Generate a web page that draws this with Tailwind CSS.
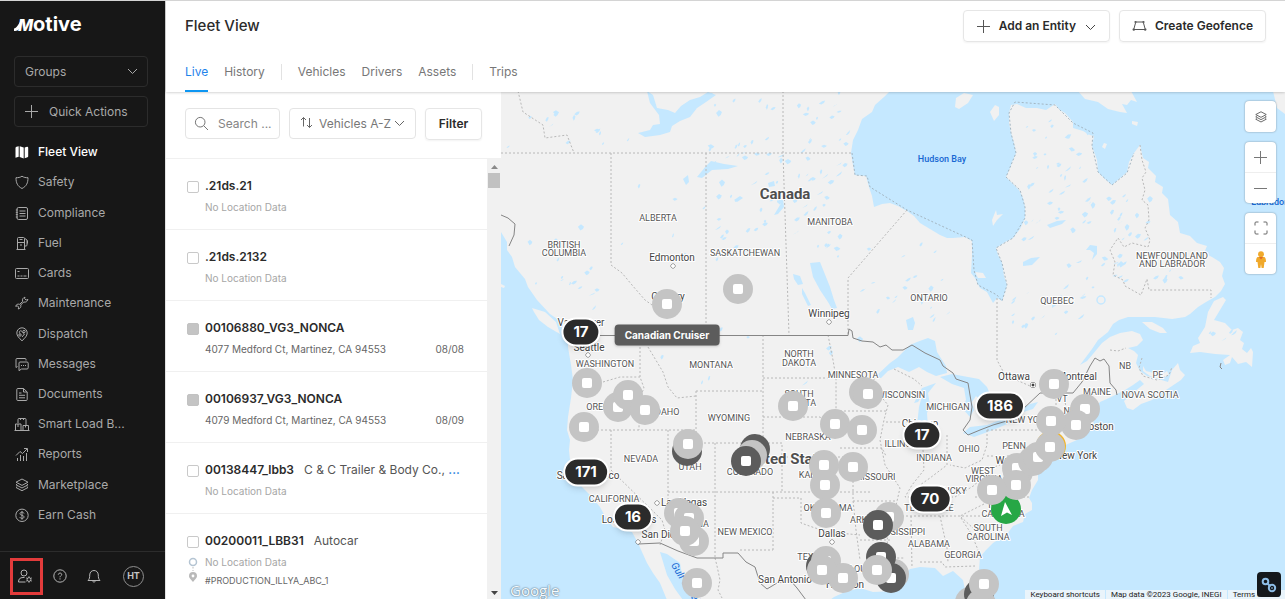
<!DOCTYPE html>
<html lang="en">
<head>
<meta charset="utf-8">
<meta name="viewport" content="width=device-width, initial-scale=1">
<title>Fleet View</title>
<script src="https://cdn.jsdelivr.net/npm/@tailwindcss/browser@4"></script>
</head>
<body class="flex h-screen flex-col overflow-hidden border-t border-[#d4d4d4] bg-white font-['Inter',sans-serif] text-[#2b2b2b]">
<div class="flex min-h-0 flex-1">

<!-- Sidebar -->
<aside class="flex w-[165px] shrink-0 flex-col bg-[#171717] text-[#a9a9a9]">
  <a href="#" aria-label="Motive" class="mt-[9px] ml-[14px] flex h-7 items-baseline text-white">
    <svg width="8" height="12" viewBox="0 0 8 12" class="-mr-[4px]" aria-hidden="true"><path d="M0 12V9.500C2.500 9.500 4 6 7.500 .5L7 7C5 11 3.500 12 0 12Z" fill="#fff"/></svg>
    <span class="text-[16px] font-extrabold italic">M</span><span class="text-[20px] leading-7 font-bold">otive</span>
  </a>
  <div class="mt-[18px] flex flex-col gap-[9px] pr-[17px] pl-[14px]">
    <button class="flex h-[31px] items-center justify-between rounded-sm border border-[#2c2c2c] px-[10px] text-xs">Groups
      <svg width="11" height="7" viewBox="0 0 11 7" fill="none" stroke="#a9a9a9" class="-mr-px"><path d="M1 1l4.500 4.500L10 1"/></svg>
    </button>
    <button class="flex h-[31px] items-center gap-[11px] rounded-sm border border-[#2c2c2c] px-[10px] text-xs whitespace-nowrap">
      <svg width="13" height="13" viewBox="0 0 13 13" stroke="#a9a9a9" class="shrink-0"><path d="M6.500 0v13M0 6.500h13"/></svg>Quick Actions
    </button>
  </div>
  <nav id="nav" class="mt-[10px] mb-[21px] flex min-h-0 flex-1 flex-col px-[14px] text-xs">
    <a href="#" class="flex flex-1 items-center gap-2 font-medium text-white"><svg width="16" height="16" viewBox="0 0 16 16" fill="#fff"><path d="M1.500 4q0-1 1-1.200l2.200-.6v10.500l-3.200 1zM5.700 2.200l4 1.300v11l-4-1.600zM10.700 3.500l2.300-.8q1.200-.2 1.200 1v8.500q0 .8-.8 1.100l-2.700.9z"/></svg>Fleet View</a>
    <a href="#" class="flex flex-1 items-center gap-2"><svg width="16" height="16" viewBox="0 0 16 16" fill="none" stroke="currentColor"><path d="M8 2.200c1.800 1.200 3.800 1.600 6 1.500 0 5.300-1.500 8.500-6 10.800-4.500-2.300-6-5.500-6-10.800 2.200.1 4.200-.3 6-1.500z"/></svg>Safety</a>
    <a href="#" class="flex flex-1 items-center gap-2"><svg width="16" height="16" viewBox="0 0 16 16" fill="none" stroke="currentColor"><rect x="3" y="2.500" width="10.500" height="12" rx="1.500"/><path d="M5.500 6h6M5.500 8.500h6M5.500 11h6M1.800 5h2M1.800 7.300h2M1.800 9.600h2M1.800 12h2"/></svg>Compliance</a>
    <a href="#" class="flex flex-1 items-center gap-2"><svg width="16" height="16" viewBox="0 0 16 16" fill="none" stroke="currentColor"><path d="M2.500 14.500h9M3.500 14.500v-11q0-1 1-1h5q1 0 1 1v11M3.500 7.500h7M5.500 4.500h3M10.500 11h1.500q1 0 1-1V5l-2-1.500M13.500 5.500v3M6 10h2"/></svg>Fuel</a>
    <a href="#" class="flex flex-1 items-center gap-2"><svg width="16" height="16" viewBox="0 0 16 16" fill="none" stroke="currentColor"><rect x="1.500" y="3.500" width="13" height="10" rx="1"/><path d="M3.500 6.500h2M3.500 11h2M6.500 11h2M9.500 11h3"/></svg>Cards</a>
    <a href="#" class="flex flex-1 items-center gap-2"><svg width="16" height="16" viewBox="0 0 16 16" fill="none" stroke="currentColor"><path d="M11 2.200c-2 .5-3 2-2.300 4.100L5.700 9.300c-2-.6-3.600.2-4 2l1.800-.4 1.200 1.200-.4 1.900c2-.3 3-2.200 2.400-4l3-3c2 .6 4-.6 4.200-2.600l-1.800.7-1.500-1.400z" stroke-linejoin="round"/></svg>Maintenance</a>
    <a href="#" class="flex flex-1 items-center gap-2"><svg width="16" height="16" viewBox="0 0 16 16" fill="none" stroke="currentColor"><path d="M8 14.800C5 12 2.800 9.800 2.800 7a5.200 5.200 0 0 1 10.400 0c0 2.800-2.200 5-5.200 7.800z"/><circle cx="6" cy="9" r="1.200"/><circle cx="10" cy="5.500" r="1.200"/><path d="M5.800 7.500c-1.500-2.500 1-3.500 2.200-2s1 2 2.500 2.500L8 11"/></svg>Dispatch</a>
    <a href="#" class="flex flex-1 items-center gap-2"><svg width="16" height="16" viewBox="0 0 16 16" fill="none" stroke="currentColor"><path d="M3.500 10.500l-1.500 1V3.500q0-1 1-1h8q1 0 1 1v1M6 6h7q1.200 0 1.200 1.200v4.600q0 1.200-1.200 1.200H7.500L5 14.700V7q0-1 1-1zM7 9.500h1M9 9.500h1M11 9.500h1"/></svg>Messages</a>
    <a href="#" class="flex flex-1 items-center gap-2"><svg width="16" height="16" viewBox="0 0 16 16" fill="none" stroke="currentColor"><path d="M9.500 2.500H3.800q-1 0-1 1v10q0 1 1 1h8.400q1 0 1-1V6zM9.500 2.500V6h3.700M5 7h2.500M5 9.300h6M5 11.800h6"/></svg>Documents</a>
    <a href="#" class="flex flex-1 items-center gap-2"><svg width="16" height="16" viewBox="0 0 16 16" fill="none" stroke="currentColor"><path d="M4 7V3.500q0-1 1-1h6q1 0 1 1V9M1.500 8h5.500v6.500H1.500zM7 14.500h7.500v-5H9V14M4 8v3M11.500 9.500v2M6.500 2.500v1.500M9.500 2.500v1.500M.5 14.500h15"/></svg>Smart Load B...</a>
    <a href="#" class="flex flex-1 items-center gap-2"><svg width="16" height="16" viewBox="0 0 16 16" fill="none" stroke="currentColor"><path d="M3.500 15v-3M6.500 15v-6M9.500 15v-5M12.500 15V7M2 9.500l4-4 2.500 2L13 3M10 2.500h3.500V6"/></svg>Reports</a>
    <a href="#" class="flex flex-1 items-center gap-2"><svg width="16" height="16" viewBox="0 0 16 16" fill="none" stroke="currentColor" stroke-linejoin="round"><path d="M8 2l6 3.200-6 3.200-6-3.200zM3.200 7L2 7.800 8 11l6-3.200-1.200-.8M3.200 9.700L2 10.500l6 3.200 6-3.200-1.200-.8"/></svg>Marketplace</a>
    <a href="#" class="flex flex-1 items-center gap-2"><svg width="16" height="16" viewBox="0 0 16 16" fill="none" stroke="currentColor"><circle cx="8" cy="8.300" r="6.200"/><path d="M10 6.500c-.3-1-1-1.300-2-1.300-2.700 0-2.600 2.700 0 3.100 2.700.4 2.700 3.100 0 3.100-1.200 0-1.900-.5-2.100-1.400M8 4v8.700"/></svg>Earn Cash</a>
  </nav>
  <div class="flex h-12 items-center border-t border-[#2c2c2c] pt-px pl-[10px]">
    <button aria-label="Admin" class="flex h-[37px] w-[33px] items-center justify-center border-[3px] border-[#e23b3b]">
      <svg width="16" height="16" viewBox="0 0 16 16" fill="none" stroke="#b5b5b5" class="-ml-1"><circle cx="7" cy="5" r="3"/><path d="M8.500 14H1.500c0-3 1.500-4.500 4.500-4.500h1.500"/><circle cx="12" cy="11.500" r="1.900"/><path d="M12 8.300v1.300M12 13.400v1.300M9.200 9.900l1.100.6M13.700 12.500l1.100.6M9.200 13.100l1.100-.6M13.700 10.500l1.100-.6"/></svg>
    </button>
    <button aria-label="Help" class="ml-[9px]"><svg width="16" height="16" viewBox="0 0 16 16" fill="none" stroke="#b5b5b5"><circle cx="8" cy="8" r="6.200"/><path d="M6.300 6.700c0-2.200 3.400-2.100 3.400-.2C9.700 7.800 8 7.800 8 9.300M8 10.300v1.200"/></svg></button>
    <button aria-label="Notifications" class="ml-[18px]"><svg width="16" height="16" viewBox="0 0 16 16" fill="none" stroke="#b5b5b5"><path d="M2 12.500h12c-1.500-1.500-1.700-3-1.700-5.500 0-6-8.600-6-8.600 0 0 2.500-.2 4-1.700 5.500zM6.500 12.500c0 2 3 2 3 0"/></svg></button>
    <button class="ml-[21px] flex size-[21px] items-center justify-center rounded-full border border-[#8f8f8f] text-[9px] font-bold text-[#c4c4c4]">HT</button>
  </div>
</aside>

<!-- Main column -->
<main class="flex min-w-0 flex-1 flex-col border-l border-[#e3e3e3]">
  <header class="relative z-20 bg-white pl-[19px] shadow-[0_0_3px_rgba(0,0,0,0.3)]">
    <div class="flex h-[50px] items-center justify-between pr-[19px]">
      <h1 class="text-[15px] font-medium">Fleet View</h1>
      <div class="flex gap-[9px] text-xs font-semibold">
        <button class="flex h-8 items-center rounded border border-[#e6e6e6] px-[13px] shadow-xs">
          <svg width="13" height="13" viewBox="0 0 13 13" stroke="#555"><path d="M6.500 0v13M0 6.500h13"/></svg>
          <span class="ml-[9px]">Add an Entity</span>
          <svg width="11" height="7" viewBox="0 0 11 7" fill="none" stroke="#444" class="mt-0.5 ml-[9px]"><path d="M1 1l4.500 4.500L10 1"/></svg>
        </button>
        <button class="flex h-8 items-center rounded border border-[#e6e6e6] px-[12px] shadow-xs">
          <svg width="15" height="12" viewBox="0 0 15 12" fill="none" stroke="#555"><path d="M4 2h7M2 9.500h11M3.500 3L2 8.500M11.500 3L13 8.500"/><g fill="#555" stroke="none"><circle cx="3.500" cy="2" r="1.100"/><circle cx="11.500" cy="2" r="1.100"/><circle cx="1.800" cy="9.500" r="1.200"/><circle cx="13.200" cy="9.500" r="1.200"/></g></svg>
          <span class="ml-2">Create Geofence</span>
        </button>
      </div>
    </div>
    <nav aria-label="Views" class="flex h-[41px] items-center text-xs text-[#777]">
      <a href="#" class="relative flex h-full items-center text-[#1f83ea]">Live<span class="absolute inset-x-0 bottom-0 h-0.5 bg-[#0d96f2]"></span></a>
      <a href="#" class="ml-4">History</a>
      <span class="mx-4 h-4 w-px bg-[#e2e2e2]"></span>
      <a href="#">Vehicles</a>
      <a href="#" class="ml-4">Drivers</a>
      <a href="#" class="ml-4">Assets</a>
      <span class="mx-4 h-4 w-px bg-[#e2e2e2]"></span>
      <a href="#">Trips</a>
    </nav>
  </header>

  <div class="flex min-h-0 flex-1">
    <!-- Vehicle list -->
    <section class="flex w-[335px] shrink-0 flex-col">
      <div class="flex h-[67px] shrink-0 items-center border-b border-[#f0f0f0] pb-[3px] pl-[19px] text-xs">
        <label class="flex h-[31px] w-[95px] items-center rounded border border-[#e4e4e4] pl-2">
          <svg width="15" height="15" viewBox="0 0 15 15" fill="none" stroke="#777" class="shrink-0"><circle cx="6.200" cy="6.200" r="4.800"/><path d="M9.700 9.700l4.300 4.300"/></svg>
          <input type="text" aria-label="Search" placeholder="Search ..." class="ml-[9px] w-full min-w-0 bg-transparent outline-none placeholder:text-[#858585]">
        </label>
        <label class="relative ml-[9px] flex h-[31px] w-[127px] items-center rounded border border-[#e4e4e4] pl-[10px] text-[#777]">
          <svg width="13" height="15" viewBox="0 0 13 15" fill="none" stroke="#666" class="shrink-0"><path d="M3.500 10.500V1.500M1 4l2.500-2.500L6 4M9.500 2v9.500M7 9L9.500 11.500 12 9"/></svg>
          <select aria-label="Sort by" class="ml-[6px] w-full appearance-none bg-transparent outline-none"><option>Vehicles A-Z</option><option>Vehicles Z-A</option></select>
          <svg width="11" height="7" viewBox="0 0 11 7" fill="none" stroke="#666" class="pointer-events-none absolute right-[10px]"><path d="M1 1l4.500 4.500L10 1"/></svg>
        </label>
        <button class="ml-[9px] h-8 w-[57px] rounded border border-[#e6e6e6] font-semibold shadow-xs">Filter</button>
      </div>
      <div class="flex min-h-0 flex-1">
        <ul id="list" class="min-w-0 flex-1 overflow-hidden"></ul>
        <div class="flex w-[14px] flex-col items-center bg-[#f1f1f1]">
          <svg width="7" height="4" viewBox="0 0 7 4" class="mt-[6px] shrink-0"><path d="M0 4l3.500-4L7 4z" fill="#8a8a8a"/></svg>
          <div class="mt-1 h-[15px] w-[12px] shrink-0 bg-[#c1c1c1]"></div>
          <svg width="7" height="4" viewBox="0 0 7 4" class="mt-auto mb-1 shrink-0"><path d="M0 0l3.500 4L7 0z" fill="#444"/></svg>
        </div>
      </div>
    </section>

    <!-- Map -->
    <section aria-label="Map" class="relative min-w-0 flex-1 overflow-hidden bg-[#c5e8ff]">
      <svg class="absolute inset-0 h-full w-full" font-family="Roboto, sans-serif">
        <g transform="translate(-501 -92)">
          <path fill="#f1f1f1" d="M501 91H890L884 97 875 105 872 112 862 119 858 130 853 140 851 153 853 165 855 175 866 176 869 187 872 196 874 207 882 204 890 203 898 206 907 211 914 216 920 223 930 229 940 235 947 238 953 238 965 237 972 241V256L971 273 975 278 980 288 987 292 993 303 997 298 1002 301 1005 292 1007 285 1004 276 1002 263 998 255 996 248 1005 242 1013 238 1020 229 1025 218 1025 207 1023 198 1019 190 1012 183 1006 177 1010 168 1012 162 1016 153 1014 143 1011 133 1009 123 1009 113 1011 105 1017 104 1026 108 1037 108 1046 110 1055 104 1060 110 1065 113 1073 122 1073 128 1083 131 1090 135 1094 136 1092 146 1097 160 1098 172 1105 179 1112 185 1119 179 1127 172 1129 162 1134 153 1140 145 1143 158 1149 162 1148 168 1156 176 1155 182 1163 187 1162 193 1168 199 1170 215 1178 222 1180 233 1190 236 1197 243 1207 246 1204 253 1212 257 1220 262 1224 268 1222 276 1225 284 1221 291 1215 297 1206 302 1198 307 1190 314 1185 317 1172 319 1155 317 1128 317 1119 320 1113 324 1108 332 1098 340 1092 349 1086 357 1080 365 1087 361 1093 354 1102 343 1110 337 1120 333 1132 331 1140 334 1143 340 1137 346 1128 348 1134 351 1138 355 1136 363 1140 371 1147 376 1155 378 1168 382 1172 370 1178 363 1180 370 1185 375 1181 380 1172 386 1160 394 1152 400 1141 404 1133 410 1127 408 1124 401 1133 393 1144 384 1140 380 1133 385 1125 390 1117 394 1109 398 1100 402 1094 410 1093 420 1095 428 1089 430 1084 436 1077 440 1063 446 1056 453 1050 463 1045 470 1038 473 1038 480 1032 490 1029 498 1032 503 1032 510 1025 514 1023 522 1013 526 1007 534 993 543 986 550 980 557 979 570 985 587 993 599H967L963 580 953 571 943 576 935 568 920 567 910 569 905 574 895 591 873 592 860 588 845 592 834 597 830 600H667L660 583 653 573 647 563 642 552 638 543 632 532 622 529 613 527 606 518 600 507 590 495 582 487 578 473 570 460 569 450 570 440 567 430 568 417 571 398 573 380 571 365 568 347 568 335 563 323 550 314 537 300 528 287 525 279 515 267 512 257 507 250 507 242 501 232Z"/>
          <g fill="#f1f1f1">
            <path d="M532 308L545 312 556 322 560 334 548 327 539 320 534 312ZM501 284l4 2-1 2-3-1ZM1078 91H1131L1137 102 1131 100 1127 105 1122 104 1127 113 1120 112 1108 109 1098 102 1085 99ZM1132 121l6 1-1 4-5-2ZM955 107l1-9 8-5 9 2-5 8-9 6ZM990 112l5-7 4 2v8l-5 6ZM1104 143l3 1-2 5-3-2ZM1273 91H1285V114L1277 108ZM975 272l8 1 3 5-8 0ZM992 220l4-10 1 5 6-1-6 6-4 6ZM1142 322L1152 322 1163 328 1167 333 1160 333 1150 329ZM1143 366l3 5 8 2 9 1 4-3 2 4-9 4-10-3-7-5Z"/>
            <path d="M1223 297L1226 300 1220 310 1214 320 1225 323 1232 330 1238 328 1243 332 1240 340 1244 343 1242 349 1247 353 1251 348 1253 352 1252 367 1246 362 1238 364 1232 357 1230 363 1225 365 1223 360 1230 355 1215 354 1200 352 1190 353 1193 346 1200 343 1198 338 1205 327 1208 312 1214 301Z"/>
          </g>
          <g fill="#c5e8ff">
            <path d="M660 552L667 554 680 563 683 580 690 590 698 600H683L675 589 667 575Z"/>
            <path d="M647 91L653 95 657 108 668 110 675 113 681 106 690 100 700 97 708 92 716 95 706 102 697 108 690 117 680 121 672 126 670 132 660 135 645 137 638 133 650 130 653 125 660 124 659 115 650 103Z"/>
            <path d="M697 177L706 166 711 161 724 164 738 166 728 169 712 170 702 178ZM683 179l5-4 1 7-3 3ZM734 200l6-4 3 2-6 4ZM810 263L820 262 824 272 830 287 834 300 837 308 832 309 828 302 820 290 813 277ZM793 274l7 2 3 8-5 1-4-6ZM802 288l3 5 6 12-3 1-6-12ZM906 320l7-3 2 6-2 7-5 0ZM768 183l6-2 1 5-6 1ZM774 215l6-10 3-6 1 8-6 7ZM1086 250l4-5 7 1v8l-5 6 2-7-4-3ZM1023 262l8-4 9-1-8 8-9 1ZM1047 225l10-4 9-1-4 4-12 4ZM1052 305l6-8 4-2-4 9-6 4Z"/>
            <path d="M875 377L890 363 897 358 910 345 917 342 928 338 935 341 937 352 946 366 947 373 936 376 927 372 919 367 909 372 898 367 888 371 881 378ZM936 383L928 393 930 405 927 413 928 428 922 433 917 425 919 407 922 396 918 402 914 403 922 388ZM940 377L952 374 968 377 979 379 987 387 993 401 993 410 984 404 976 396 972 402 974 410 970 417 962 408 966 400 964 388 952 384ZM963 433L970 427 987 425 1000 420 1020 415 1012 422 993 430 974 437ZM1016 411l14-7 8-2-5 7-13 4Z"/>
          </g>
          <circle cx="1101" cy="300" r="4" fill="none" stroke="#c5e8ff" stroke-width="1.500"/>
          <g id="lakes" fill="#c5e8ff"></g>
          <g fill="none" stroke="#b8b8b8" stroke-width="1" stroke-dasharray="2 2">
            <path d="M501 153H852M518 91L523 112 543 125 545 138 567 135 574 153M611 153V265L622 273 632 285 645 300 652 305M706 153V335M783 91V153L789 335M907 210L848 278V335M997 298V360L1005 375 1030 386M1140 145L1142 160 1146 172 1142 178 1145 190 1142 200 1148 205 1149 220 1145 228 1150 240 1148 247 1132 243 1124 247 1118 238 1110 250 1115 262 1113 275 1123 280 1125 286 1141 295 1147 279 1149 290H1211V298M1110 350l8 1 8-3M1142 358l-3 10 4 8 14 4 12-5 3-8"/>
            <path stroke="#a4b6c2" d="M852 153L855 175 867 176 870 187 907 210 972 240 974 270 978 285 997 295 1002 301 1007 285 1002 263 996 248 1013 238 1025 218 1025 207 1020 190 1006 177 1016 153 1011 133 1009 113 1015 102 1055 105 1073 123 1093 133 1092 146 1098 172 1112 185 1127 173 1134 153"/>
            <path d="M603 382L620 377H640M640 335V377L644 388 639 400V430M648 335V347L663 372 668 387 677 398 696 396M696 391H763M696 391V443M585 430H696M611 430V470L662 520 665 530 660 545M668 430V516M696 443H782V492M668 492H872M715 443V558M763 335V443M763 378H836M763 417H820L833 427M782 457H851M773 492V550M773 498H801V523L815 528 838 533 860 535M740 550H773M828 335L833 360 836 378V411M836 411H886M840 448H882L886 456M853 457V500L856 530 860 560M853 501H895M860 540H890M874 370V388L888 405 884 420 880 440 885 465 900 488 895 510 887 540 890 558H905M894 369L914 379 922 386M886 422H918M922 430L924 470 912 485 905 497H953M947 435V465L930 478 920 485M898 516H997M911 516L912 568M940 516L947 548 948 562M920 562H942L945 567 975 566M961 518L972 535 980 555M984 504L960 516 975 530 990 530M987 430V445L982 460 965 468 950 465M987 430H1045L1050 440M987 456H1038M955 497L975 485 985 470 1000 465M975 497H1030M1056 395V420M1064 395L1068 420M1058 420H1082M715 558l2 8 3 14-2 10 4 8"/>
          </g>
          <g fill="none" stroke="#858585" stroke-width="1">
            <path d="M568 335.500H848L849 329 852 331 853 338 862 341 873 342 880 347 886 345 892 350 903 350 912 345 925 353 940 360 943 366 953 373 956 379 968 383 970 395 972 407 970 420 963 430 968 435 980 430 993 425 1017 418 1022 410 1040 393H1073L1082 382 1090 366 1095 358 1100 361 1104 359 1109 366 1110 383 1116 390 1117 395"/>
            <path d="M638 544L660 543 678 551 697 558H723V553H738L746 562 755 567 760 583 767 589 777 583 790 580 797 588 806 600M501 215L508 218 515 224 514 235 509 246M1221 363l-1 4 2 2"/>
          </g>
          <g id="labels" text-anchor="middle" stroke="#fff" stroke-width="2" stroke-linejoin="round" paint-order="stroke"></g>
        </g>
      </svg>

      <div id="markers"></div>

      <div class="absolute bottom-0 left-[9px] font-['Open_Sans',sans-serif] text-[15px] leading-[18px] text-[#f5fbff] [text-shadow:0_0_2px_#5c7080,0_0_1px_#5c7080]">Google</div>

      <!-- Map controls -->
      <div class="absolute top-[9px] right-[9px] flex w-[31px] flex-col gap-[10px]">
        <button aria-label="Layers" class="flex h-[31px] items-center justify-center rounded bg-white shadow-[0_0_2px_rgba(0,0,0,0.4)]">
          <svg width="14" height="14" viewBox="0 0 16 16" fill="none" stroke="#555" stroke-linejoin="round"><path d="M8 2l6 3.200-6 3.200-6-3.200zM3.200 7L2 7.800 8 11l6-3.200-1.200-.8M3.200 9.700L2 10.500l6 3.200 6-3.200-1.200-.8"/></svg>
        </button>
        <div class="flex flex-col rounded bg-white shadow-[0_0_2px_rgba(0,0,0,0.4)]">
          <button aria-label="Zoom in" class="flex h-[31px] items-center justify-center border-b border-[#eee]"><svg width="13" height="13" viewBox="0 0 13 13" stroke="#777"><path d="M6.500 0v13M0 6.500h13"/></svg></button>
          <button aria-label="Zoom out" class="flex h-[30px] items-center justify-center"><svg width="13" height="13" viewBox="0 0 13 13" stroke="#777"><path d="M0 6.500h13"/></svg></button>
        </div>
        <div class="flex flex-col rounded bg-white shadow-[0_0_2px_rgba(0,0,0,0.4)]">
          <button aria-label="Full screen" class="flex h-[31px] items-center justify-center border-b border-[#eee]"><svg width="14" height="14" viewBox="0 0 14 14" fill="none" stroke="#666"><path d="M1 4.500V2q0-1 1-1h2.500M9.500 1H12q1 0 1 1v2.500M13 9.500V12q0 1-1 1H9.500M4.500 13H2q-1 0-1-1V9.500"/></svg></button>
          <button aria-label="Street View" class="flex h-[30px] items-center justify-center"><svg width="12" height="17" viewBox="0 0 12 17"><circle cx="6" cy="3.200" r="2.900" fill="#f0a92b"/><path d="M2.500 6h7q1.500 1 1.500 5H9.500l-.8 6H6.600L6 13l-.6 4H3.300l-.8-6H1q0-4 1.500-5z" fill="#f0a92b"/><path d="M4 6l2 2.500L8 6z" fill="#e0662a"/></svg></button>
        </div>
      </div>

      <div class="absolute right-0 bottom-0 flex h-[9px] gap-px font-['Roboto',sans-serif] text-[8px] leading-[9px] whitespace-nowrap text-[#222]">
        <button class="bg-[#e9f4fb] px-[5px]">Keyboard shortcuts</button>
        <span class="bg-[#e9f4fb] px-[5px]">Map data ©2023 Google, INEGI</span>
        <a href="#" class="bg-[#e9f4fb] px-[5px]">Terms of Use</a>
      </div>
      <button aria-label="Chat" class="absolute right-1 bottom-[2px] flex h-[25px] w-6 items-center justify-center rounded-sm bg-[#14181c]">
        <svg width="16" height="16" viewBox="0 0 16 16" fill="none" stroke="#8dbde6" stroke-width="2"><circle cx="4.500" cy="4.500" r="2.800"/><circle cx="11" cy="11" r="3.200"/><path d="M6 6l3.500 3.500M11 10.500v1"/></svg>
      </button>
    </section>
  </div>
</main>
</div>

<script>
// Vehicle rows: id, extra name, location, date, destination
const rows = [
  ['.21ds.21'], ['.21ds.2132'],
  ['00106880_VG3_NONCA', '', '4077 Medford Ct, Martinez, CA 94553', '08/08'],
  ['00106937_VG3_NONCA', '', '4079 Medford Ct, Martinez, CA 94553', '08/09'],
  ['00138447_lbb3', 'C &amp; C Trailer &amp; Body Co., <a href="#" class="font-semibold text-[#2480e0]">...</a>'],
  ['00200011_LBB31', 'Autocar', '', '', '#PRODUCTION_ILLYA_ABC_1'],
];
document.getElementById('list').innerHTML = rows.map(([id, name, loc, date, dest], i) => `
<li class="flex min-h-[71px] border-b border-[#f0f0f0] pt-[18px] pr-[23px] pl-[21px] last:border-b-0">
  <div class="flex w-[18px] shrink-0 flex-col pt-0.5">
    <input type="checkbox" id="v${i}" class="mt-[2px] size-3 shrink-0 appearance-none rounded-xs border ${loc ? 'border-[#c2c2c2] bg-[#c4c4c4]' : 'border-[#c9c9c9] bg-white'}">
    ${dest ? '<svg width="12" height="26" viewBox="0 0 12 26" class="mt-[9px] shrink-0"><circle cx="6" cy="5" r="3.500" fill="none" stroke="#b4c4d2" stroke-width="1.500"/><path d="M6 10v1.500M6 13v1" stroke="#bbb"/><path d="M6 25c-3-3.500-4-4.500-4-6a4 4 0 0 1 8 0c0 1.500-1 2.500-4 6z" fill="#b9b9b9"/><circle cx="6" cy="19" r="1.400" fill="#fff"/></svg>' : ''}
  </div>
  <div class="min-w-0 flex-1">
    <div class="flex h-[18px] items-center gap-[10px] text-xs whitespace-nowrap text-[#555]"><label for="v${i}" class="font-semibold text-[#2b2b2b]">${id}</label><span>${name || ''}</span></div>
    <div class="mt-1 flex h-4 items-center justify-between text-[10px] ${loc ? 'text-[#666]' : 'text-[#a6a6a6]'}"><span>${loc || 'No Location Data'}</span><span>${date || ''}</span></div>
    ${dest ? `<div class="mt-1 text-[9px] leading-[14px] text-[#666]">${dest}</div>` : ''}
  </div>
</li>`).join('');

// Map labels: text, x, baseline y, size, weight, colour
const L = [];
const region = (t, x, y) => L.push([t, x, y, 9, 400, '#555']);
const city = (t, x, y) => L.push([t, x, y, 10, 400, '#444']);
[['BRITISH',564,248],['COLUMBIA',564,256],['ALBERTA',658,221],['SASKATCHEWAN',745,256],['MANITOBA',830,225],['ONTARIO',929,301],['QUEBEC',1057,304],['NEWFOUNDLAND',1172,259],['AND LABRADOR',1172,267],
['WASHINGTON',605,367],['MONTANA',711,368],['OREGON',604,410],['IDAHO',666,415],['WYOMING',729,421],['NEVADA',641,462],['UTAH',690,470],['COLORADO',750,475],['CALIFORNIA',614,502],['ARIZONA',690,527],['NEW MEXICO',745,535],
['NORTH',799,357],['DAKOTA',799,366],['SOUTH',799,397],['DAKOTA',799,406],['MINNESOTA',853,378],['WISCONSIN',901,398],['MICHIGAN',948,410],['NEBRASKA',808,440],['KANSAS',816,478],['MISSOURI',875,480],['ILLINOIS',902,447],['INDIANA',934,461],['OHIO',969,452],['KENTUCKY',944,494],['TENNESSEE',929,511],['OKLAHOMA',828,511],['ARKANSAS',873,523],['MISSISSIPPI',900,535],['ALABAMA',929,547],['GEORGIA',963,558],['TEXAS',811,560],['LOUISIANA',872,572],['WEST',983,474],['VIRGINIA',984,482],['NORTH',1003,508],['CAROLINA',1003,517],['SOUTH',988,531],['CAROLINA',988,540],['NEW YORK',1028,423],['PENN',1014,449],['VT',1062,402],['NH',1070,414],['MAINE',1097,395],['NB',1125,369],['PE',1158,378],['NOVA SCOTIA',1150,398]].forEach(a => region(...a));
[['Edmonton',672,261],['Calgary',668,300],['Winnipeg',829,317],['Vancouver',581,326],['Seattle',589,351],['San Francisco',588,479],['Los Angeles',629,523],['San Diego',664,538],['Las Vegas',684,506],['Dallas',832,537],['San Antonio',785,583],['Houston',845,588],['Chicago',920,427],['Ottawa',1014,380],['Montreal',1077,380],['Boston',1098,430],['New York',1076,459],['Washington',1022,464]].forEach(a => city(...a));
L.push(['Canada',785,199,15,700,'#4f4f4f'], ['United States',788,464,15,700,'#4f4f4f'], ['Hudson Bay',942,162,9,500,'#1667d2'], ['Labrador Sea',1278,205,9,500,'#1667d2']);
document.getElementById('labels').innerHTML = L.map(([t,x,y,s,w,c]) => `<text x="${x}" y="${y}" font-size="${s}" font-weight="${w}" fill="${c}"${c === '#1667d2' ? ' stroke="none"' : ''}>${t}</text>`).join('')
  + '<text transform="translate(690 596) rotate(58)" font-size="10" font-style="italic" fill="#1667d2" stroke="none">Gulf of California</text>'
  + [[673,266],[829,322],[588,355],[657,503],[638,542],[832,542]].map(([x,y]) => `<circle cx="${x}" cy="${y}" r="2" fill="#fff" stroke="#444" stroke-width="1"/>`).join('')
  + '<g stroke-width="1"><circle cx="1033" cy="385" r="2.500" fill="#fff" stroke="#444"/><circle cx="1033" cy="385" r="1" fill="#333" stroke="#333"/></g>';

// Small lakes, spread over the regions where they are common: x, y, width, height, count
let seed = 7;
const rnd = () => (seed = (seed * 16807) % 2147483647) / 2147483647;
const areas = [[508,96,130,55,14],[710,94,140,90,55],[715,185,130,75,38],[510,175,90,110,9],[545,265,55,45,7],[620,160,85,100,6],[860,245,100,80,22],[1025,120,65,90,30],[1020,200,110,90,34],[1010,290,85,50,14],[1110,190,45,50,14],[1125,250,80,35,9],[1205,330,30,15,5],[805,340,60,45,8],[620,330,140,60,5]];
document.getElementById('lakes').innerHTML = areas.flatMap(([x,y,w,h,n]) => Array.from({length: n}, () => {
  const cx = Math.round(x + rnd() * w), cy = Math.round(y + rnd() * h), a = 1 + rnd() * 2.4, b = 1 + rnd() * 2, k = rnd() * 2 - 1;
  return `<path d="M${cx - a} ${cy + a * k}l${a} ${-b}l${a} ${-a * k}l${-a * .4} ${b}l${-a * .8} ${b * .6}z"/>`;
})).join('');

// Vehicle markers: x, y, kind (g idle, d off, y alert, m moving)
const pins = [[738,289,'g'],[667,304,'g'],[587,383,'g'],[618,407,'g'],[628,395,'g'],[645,410,'g'],[584,427,'g'],[687,451,'d'],[688,444,'g'],[755,449,'d'],[752,455,'g'],[746,461,'d'],[679,513,'g'],[689,518,'g'],[694,541,'g'],[685,531,'g'],[697,583,'g'],[793,406,'g'],[835,424,'g'],[862,430,'g'],[864,392,'g'],[868,394,'g'],[853,467,'g'],[824,465,'g'],[825,485,'g'],[826,513,'g'],[889,517,'g'],[878,525,'d'],[821,566,'d'],[826,561,'g'],[843,578,'g'],[822,570,'g'],[894,574,'g'],[891,578,'d'],[881,557,'d'],[877,570,'g'],[970,602,'g'],[979,594,'d'],[981,604,'g'],[984,584,'g'],[1006,509,'m'],[1018,472,'g'],[1017,468,'g'],[1016,485,'g'],[992,490,'g'],[1033,461,'g'],[1038,457,'g'],[1051,446,'y'],[1050,447,'g'],[1085,409,'g'],[1076,425,'g'],[1051,421,'g'],[1054,384,'g']];
const tone = {g: 'bg-[#c4c4c4]', d: 'bg-[#5c5c5c]', y: 'bg-[#f0b429]', m: 'bg-[#27a745]'};
const clusters = [[581,332,17],[586,472,171],[633,517,16],[922,435,17],[1000,406,186],[930,499,70]];
document.getElementById('markers').innerHTML = pins.map(([x,y,k]) => `
<button aria-label="Vehicle" class="absolute flex size-[30px] -translate-1/2 items-center justify-center rounded-full ${tone[k]}" style="left:${x - 501}px;top:${y - 92}px">${k === 'm'
  ? '<svg width="14" height="14" viewBox="0 0 14 14"><path d="M6 0l7 13-5-2.500L2 14z" fill="#fff"/></svg>'
  : '<span class="size-[10px] rounded-[2px] bg-white"></span>'}</button>`).join('')
  + clusters.map(([x,y,n]) => `<button class="absolute flex h-[29px] -translate-1/2 items-center justify-center rounded-full border-2 border-white bg-[#2b2b2b] px-[10px] text-[15px] font-bold text-white shadow-md" style="left:${x - 501}px;top:${y - 92}px">${n}</button>`).join('')
  + '<div class="absolute flex h-[21px] -translate-1/2 items-center rounded-sm bg-[#5c5c5c] px-[10px] text-[10px] font-bold whitespace-nowrap text-white shadow" style="left:166px;top:243px">Canadian Cruiser</div>';
</script>
</body>
</html>
